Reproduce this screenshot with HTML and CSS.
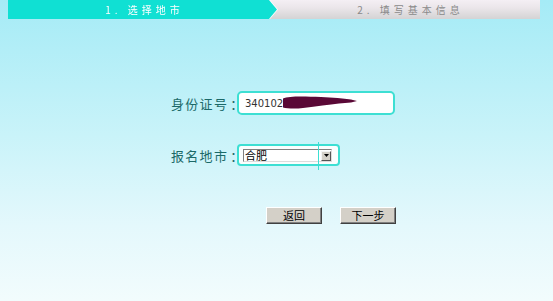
FILE: index.html
```html
<!DOCTYPE html>
<html lang="zh-CN">
<head>
<meta charset="utf-8">
<title>选择地市</title>
<link rel="stylesheet" href="styles.css">
</head>
<body>
<div class="steps">
  <div class="step-wrap"><div class="step step-active">1. 选择地市</div></div>
  <div class="step step-next">2. 填写基本信息</div>
</div>

<div class="form">
  <div class="row">
    <span class="label">身份证号<span class="colon">：</span></span>
    <div class="input">
      <span class="value">3401021</span>
      <svg class="redact" width="80" height="16" viewBox="0 0 80 16">
        <path d="M2,3.5 C8,1 22,1.5 40,2 C52,2.5 62,3.5 70,4.5 L76,6 L70,7.5 L58,8.5 C48,9.5 36,11.5 22,13 C14,14 6,13.5 2,12.5 Z" fill="#5a0836"/>
      </svg>
    </div>
  </div>
  <div class="row row-city">
    <span class="label">报名地市<span class="colon">：</span></span>
    <div class="select-wrap">
      <div class="select">
        <span class="select-text">合肥</span>
        <span class="select-btn"><svg width="5" height="3" viewBox="0 0 5 3"><path d="M0,0 H5 L2.5,3 Z" fill="#000"/></svg></span>
      </div>
      <span class="caret-line"></span>
    </div>
  </div>
  <div class="buttons">
    <button class="btn" type="button">返回</button>
    <button class="btn" type="button">下一步</button>
  </div>
</div>
</body>
</html>
```

FILE: styles.css
```css
html, body {
  margin: 0;
  padding: 0;
}
body {
  width: 553px;
  height: 301px;
  overflow: hidden;
  background: linear-gradient(to bottom, #a5ebf6 0%, #c9f3f9 45%, #e4f8fc 75%, #f2fcfd 100%);
  font-family: "Noto Sans CJK SC", "DejaVu Sans", sans-serif;
}

/* ---------- step bar ---------- */
.steps {
  display: flex;
  margin-left: 8px;
  width: 532px;
  height: 19px;
  background: linear-gradient(to bottom, #f4eff4 0%, #ebe6ea 40%, #d4d3d4 100%);
}
.step-wrap {
  width: 269px;
  flex: none;
  filter: drop-shadow(1.5px 0 0 #ffffff);
}
.step {
  height: 19px;
  line-height: 19px;
  font-size: 10px;
  letter-spacing: 4px;
  text-align: center;
  white-space: nowrap;
}
.step-active {
  background: #10e0d3;
  color: #ffffff;
  clip-path: polygon(0 0, 261px 0, 100% 50%, 261px 100%, 0 100%);
  padding-left: 4px;
}
.step-next {
  flex: 1;
  color: #8a8a8a;
  padding-left: 4px;
}

/* ---------- form ---------- */
.form {
  margin-top: 72px;
  padding-left: 171px;
}
.row {
  display: flex;
  align-items: center;
}
.row-city {
  margin-top: 29px;
}
.label {
  width: 66px;
  flex: none;
  font-size: 13px;
  letter-spacing: 1.3px;
  color: #1b6968;
  white-space: nowrap;
}
.colon {
  margin-left: 2px;
  letter-spacing: 0;
}
.input {
  position: relative;
  box-sizing: border-box;
  width: 158px;
  height: 24px;
  border: 2px solid #3ddfd3;
  border-radius: 5px;
  background: #ffffff;
  display: flex;
  align-items: center;
  padding-left: 6px;
}
.value {
  font-family: "DejaVu Sans", sans-serif;
  font-size: 10px;
  color: #333333;
}
.redact {
  position: absolute;
  left: 42px;
  top: 2px;
}

.select-wrap {
  position: relative;
  box-sizing: border-box;
  width: 103px;
  height: 22px;
  border: 2px solid #3ddfd3;
  border-radius: 4px;
  background: #fbfefe;
  padding: 3px 6px 0 4px;
}
.select {
  box-sizing: border-box;
  height: 13px;
  border-top: 1px solid #808080;
  border-left: 1px solid #808080;
  border-right: 1px solid #dcdcdc;
  border-bottom: 1px solid #dcdcdc;
  background: #ffffff;
  display: flex;
  align-items: center;
  justify-content: space-between;
}
.select-text {
  font-size: 11px;
  line-height: 11px;
  color: #000;
  padding-left: 1px;
}
.select-btn {
  box-sizing: border-box;
  width: 10px;
  height: 10px;
  background: #d4d0c8;
  border-top: 1px solid #f4f4f4;
  border-left: 1px solid #f4f4f4;
  border-right: 1px solid #555;
  border-bottom: 1px solid #555;
  display: flex;
  align-items: center;
  justify-content: center;
}
.select-btn svg {
  display: block;
}
.caret-line {
  position: absolute;
  left: 79px;
  top: -4px;
  width: 1px;
  height: 28px;
  background: #3ddfd3;
}

/* ---------- buttons ---------- */
.buttons {
  display: flex;
  gap: 18px;
  margin-top: 41px;
  padding-left: 95px;
}
.btn {
  box-sizing: border-box;
  width: 56px;
  height: 17px;
  padding: 0;
  margin: 0;
  font-family: "Noto Sans CJK SC", sans-serif;
  font-size: 11px;
  line-height: 13px;
  color: #000;
  background: #d4d0c8;
  border-top: 1px solid #ffffff;
  border-left: 1px solid #ffffff;
  border-right: 1px solid #404040;
  border-bottom: 1px solid #404040;
  box-shadow: inset -1px -1px 0 #808080;
}
```
